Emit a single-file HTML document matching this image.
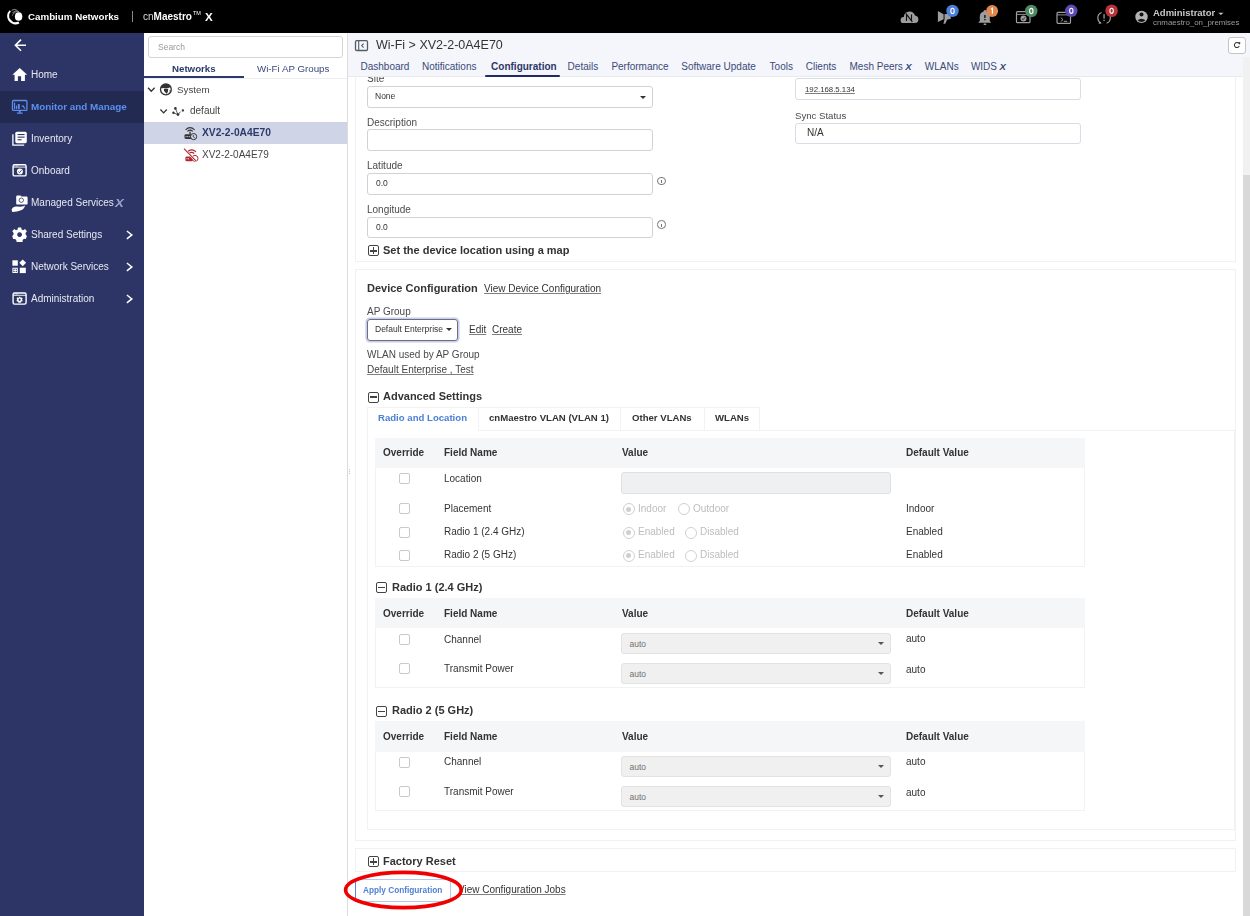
<!DOCTYPE html>
<html><head><meta charset="utf-8">
<style>
*{box-sizing:border-box;margin:0;padding:0}
html,body{width:1250px;height:916px;overflow:hidden;background:#fff;font-family:"Liberation Sans",sans-serif;color:#333}
.t{will-change:transform}
.a{position:absolute;white-space:nowrap}
.t{position:absolute;white-space:nowrap;line-height:1}
.info{position:absolute;width:8.5px;height:8.5px;border:0.9px solid #777;border-radius:50%}
.info::after{content:"";position:absolute;left:2.9px;top:2.6px;width:0.9px;height:3px;background:#777}
#hdr{position:absolute;left:0;top:0;width:1250px;height:32.7px;background:#000;z-index:3}
#side{position:absolute;left:0;top:32px;width:144px;height:884px;background:#2d3566}
#tree{position:absolute;left:144px;top:32px;width:203px;height:884px;background:#fff}
#main{position:absolute;left:347px;top:32px;width:903px;height:884px;background:#fff;border-left:1px solid #d8d8d8}
.sx{left:31px;color:#e6e8f0;font-size:10px}
.card{position:absolute;border:1px solid #f1f1f3;background:#fff}
.lbl{position:absolute;font-size:10px;color:#4a4a4a;white-space:nowrap;margin-top:0.6px}
.inp{position:absolute;border:1px solid #cfd3d8;border-radius:3px;background:#fff;font-size:8.5px;color:#333}
.bt{font-weight:bold;color:#333}
.tabl{position:absolute;left:375px;width:710px;border:1px solid #f1f2f3}
.th{position:absolute;left:0;top:0;width:708px;height:30px;background:#f5f6f8}
.th span{position:absolute;top:10px;font-size:10px;font-weight:bold;color:#333}
.cb{position:absolute;width:11px;height:11px;border:1px solid #c9c9c9;border-radius:2px;background:#fff}
.td{position:absolute;font-size:10px;color:#333;white-space:nowrap}
.rd{position:absolute;width:12px;height:12px;border:1px solid #d0d0d0;border-radius:50%;background:#fff}
.rd.on::after{content:"";position:absolute;left:2.5px;top:2.5px;width:5px;height:5px;border-radius:50%;background:#cfcfcf}
.rt{position:absolute;font-size:10px;color:#bdbdbd;white-space:nowrap}
.sel{position:absolute;left:621px;width:270px;height:21px;background:#f0f0f0;border:1px solid #e2e2e2;border-radius:3px}
.sel span{position:absolute;left:7.5px;top:6.3px;line-height:1;font-size:8.5px;color:#707070}
.car{position:absolute;width:0;height:0;border-left:3px solid transparent;border-right:3px solid transparent;border-top:3px solid #333}
.pm{position:absolute;width:11.3px;height:11px;border:1.3px solid #444;border-radius:2px}
.pm::before{content:"";position:absolute;left:1.1px;right:1.1px;top:3.75px;height:1.5px;background:#444}
.pm.plus::after{content:"";position:absolute;top:1.1px;bottom:1.1px;left:3.95px;width:1.5px;background:#444}
.tab{position:absolute;top:61.5px;line-height:1;font-size:10px;color:#3b4a78;white-space:nowrap;z-index:7}
u{text-decoration:underline}
.t[style*="underline"]{text-decoration-color:#808080 !important}
</style></head><body>

<!-- HEADER -->
<div id="hdr">
  
  <div class="t" style="left:28.3px;top:12px;font-size:9.75px;font-weight:bold;color:#fff">Cambium Networks</div>
  <div class="a" style="left:131.5px;top:11px;width:1px;height:10.5px;background:#8a8a8a"></div>
  <div class="t" style="left:143px;top:12.3px;font-size:10px;color:#fff"><span style="color:#ddd">cn</span><b>Maestro</b></div>
  <div class="t" style="left:192.5px;top:10.8px;font-size:5.5px;color:#fff">TM</div>
  <div class="t" style="left:204.8px;top:10.6px;font-size:11.6px;font-weight:bold;color:#fff">X</div>
  <div class="t" style="left:1152.5px;top:7.9px;font-size:9.5px;font-weight:bold;color:#c8c8c8">Administrator</div>
  <div class="t" style="left:1152.5px;top:18.8px;font-size:7.9px;color:#9a9a9a">cnmaestro_on_premises</div>
</div>

<!-- SIDEBAR -->
<div id="side"></div>
<div class="a" style="left:0;top:91px;width:144px;height:31.5px;background:#222a52"></div>
<div class="t sx" style="top:calc(69.7px + 0.5px)">Home</div>
<div class="t sx" style="top:calc(101.3px + 0.5px);color:#5b8ff0;font-weight:bold;font-size:9.85px">Monitor and Manage</div>
<div class="t sx" style="top:calc(133.7px + 0.5px)">Inventory</div>
<div class="t sx" style="top:calc(165.4px + 0.5px)">Onboard</div>
<div class="t sx" style="top:calc(197.5px + 0.5px)">Managed Services</div>
<div class="t sx" style="top:calc(229.5px + 0.5px)">Shared Settings</div>
<div class="t sx" style="top:calc(261.5px + 0.5px)">Network Services</div>
<div class="t sx" style="top:calc(293.3px + 0.5px)">Administration</div>
<div class="t" style="left:114.6px;top:197.6px;font-size:11px;font-weight:bold;font-style:italic;color:#9aa4d2;transform:scaleX(1.2);transform-origin:0 0">X</div>

<!-- TREE -->
<div id="tree"></div>
<div class="a" style="left:148px;top:36px;width:195px;height:22px;border:1px solid #d5d5d5;border-radius:3px"></div>
<div class="t" style="left:157.5px;top:42.8px;font-size:8.5px;color:#999">Search</div>
<div class="t" style="left:171.9px;top:63.6px;font-size:9.7px;font-weight:bold;color:#2b3a6b">Networks</div>
<div class="t" style="left:257.3px;top:63.6px;font-size:9.75px;color:#3b4a78">Wi-Fi AP Groups</div>
<div class="a" style="left:144px;top:76px;width:100px;height:2px;background:#2b3a6b"></div>
<div class="a" style="left:144px;top:78px;width:203px;height:1px;background:#eee"></div>
<div class="t" style="left:176.8px;top:84.5px;font-size:9.75px;color:#444">System</div>
<div class="t" style="left:189.7px;top:106px;font-size:10px;color:#444">default</div>
<div class="a" style="left:144px;top:122.2px;width:203px;height:21.6px;background:#cfd4e6"></div>
<div class="t" style="left:201.7px;top:127.5px;font-size:10.25px;font-weight:bold;color:#2b3a6b">XV2-2-0A4E70</div>
<div class="t" style="left:201.7px;top:149.9px;font-size:10px;color:#444">XV2-2-0A4E79</div>

<!-- MAIN -->
<div class="a" style="left:347px;top:32px;width:1px;height:884px;background:#dcdcdc"></div>

<!-- card 1 -->
<div class="card" style="left:355px;top:40px;width:881px;height:222px"></div>
<div class="t lbl" style="left:367px;top:73px">Site</div>
<div class="inp" style="left:367px;top:86px;width:286px;height:22px"></div>
<div class="t" style="left:375px;top:91.6px;font-size:8.5px;color:#333">None</div>
<div class="car" style="left:640px;top:96px"></div>
<div class="t lbl" style="left:367px;top:117.5px">Description</div>
<div class="inp" style="left:367px;top:129px;width:286px;height:22px"></div>
<div class="t lbl" style="left:367px;top:160.9px">Latitude</div>
<div class="inp" style="left:367px;top:173px;width:286px;height:22px"></div>
<div class="t" style="left:376.4px;top:179.4px;font-size:8.5px;color:#333">0.0</div>
<div class="info" style="left:657px;top:176.5px"></div>
<div class="t lbl" style="left:367px;top:204.5px">Longitude</div>
<div class="inp" style="left:367px;top:217px;width:286px;height:21px"></div>
<div class="t" style="left:376.4px;top:223.2px;font-size:8.5px;color:#333">0.0</div>
<div class="info" style="left:657px;top:220.3px"></div>
<div class="pm plus" style="left:367.8px;top:245.3px"></div>
<div class="t bt" style="left:383.3px;top:245.4px;font-size:11px">Set the device location using a map</div>

<div class="inp" style="left:795px;top:78px;width:286px;height:22px;border-color:#d7dde4"></div>
<div class="t" style="left:804.8px;top:85.6px;font-size:7.8px;color:#333;text-decoration:underline">192.168.5.134</div>
<div class="t lbl" style="left:795.4px;top:110.3px;font-size:9.6px">Sync Status</div>
<div class="inp" style="left:795px;top:122.5px;width:286px;height:21.5px;border-color:#d7dde4"></div>
<div class="t" style="left:807px;top:128.1px;font-size:10px;color:#333">N/A</div>

<!-- content header (covers) -->
<div class="a" style="left:348px;top:32.7px;width:902px;height:44.6px;background:#f4f6fb;border-bottom:1px solid #e8eaee;z-index:5"></div>
<div class="a" style="left:1243px;top:57px;width:7px;height:859px;background:#f1f1f1;z-index:6"></div>
<div class="a" style="left:1243px;top:175px;width:7px;height:741px;background:#d9d9d9;z-index:6"></div>
<div class="a" style="left:1227.5px;top:36.5px;width:18.7px;height:17.2px;background:#fff;border:1px solid #c4c4c4;border-radius:3px;z-index:7"></div>
<div class="t" style="left:375.5px;top:38.9px;font-size:12.5px;color:#333;z-index:7">Wi-Fi &gt; XV2-2-0A4E70</div>
<div class="tab" style="left:360.5px">Dashboard</div>
<div class="tab" style="left:422px">Notifications</div>
<div class="tab" style="left:491.1px;font-weight:bold;color:#2d3768">Configuration</div>
<div class="a" style="left:485px;top:75px;width:75px;height:2px;background:#1f2a66;border-radius:1px;z-index:7"></div>
<div class="tab" style="left:567.6px">Details</div>
<div class="tab" style="left:611.4px">Performance</div>
<div class="tab" style="left:681.3px">Software Update</div>
<div class="tab" style="left:769.6px">Tools</div>
<div class="tab" style="left:805.7px">Clients</div>
<div class="tab" style="left:849.5px">Mesh Peers<i style="font-weight:bold;font-size:9.6px;margin-left:2.5px">X</i></div>
<div class="tab" style="left:924.8px">WLANs</div>
<div class="tab" style="left:970.9px">WIDS<i style="font-weight:bold;font-size:9.6px;margin-left:2.5px">X</i></div>

<!-- card 2 -->
<div class="card" style="left:355px;top:269px;width:881px;height:572px"></div>
<div class="t bt" style="left:366.8px;top:283.4px;font-size:11px">Device Configuration</div>
<div class="t" style="left:484.4px;top:284.2px;font-size:10px;color:#333;text-decoration:underline">View Device Configuration</div>
<div class="t lbl" style="left:366.8px;top:306.5px">AP Group</div>
<div class="a" style="left:366.8px;top:319.3px;width:91.4px;height:21.6px;border:1px solid #707070;border-radius:3px;box-shadow:0 0 0 1.6px #c6ccf6"></div>
<div class="t" style="left:374.7px;top:325px;font-size:8.5px;color:#333">Default Enterprise</div>
<div class="car" style="left:446px;top:328.4px"></div>
<div class="t" style="left:468.7px;top:324.9px;font-size:10px;color:#333;text-decoration:underline">Edit</div>
<div class="t" style="left:492px;top:324.9px;font-size:10px;color:#333;text-decoration:underline">Create</div>
<div class="t lbl" style="left:366.8px;top:349.5px">WLAN used by AP Group</div>
<div class="t" style="left:366.8px;top:364.5px;font-size:10px;color:#444;text-decoration:underline">Default Enterprise , Test</div>
<div class="pm" style="left:367.5px;top:391.5px"></div>
<div class="t bt" style="left:383.1px;top:390.7px;font-size:11px">Advanced Settings</div>

<div class="a" style="left:367px;top:430px;width:868px;height:400px;border:1px solid #f1f2f3"></div>
<div class="a" style="left:367px;top:407px;width:393px;height:23px;border:1px solid #f1f2f3;border-bottom:none;background:#fff"></div>
<div class="a" style="left:477.5px;top:407px;width:1px;height:23px;background:#f1f2f3"></div>
<div class="a" style="left:620px;top:407px;width:1px;height:23px;background:#f1f2f3"></div>
<div class="a" style="left:703.5px;top:407px;width:1px;height:23px;background:#f1f2f3"></div>
<div class="a" style="left:368px;top:429.5px;width:109.5px;height:1.5px;background:#fff"></div>
<div class="t" style="left:378.3px;top:412.9px;font-size:9.6px;font-weight:bold;color:#4a7fd4">Radio and Location</div>
<div class="t bt" style="left:489px;top:412.9px;font-size:9.6px">cnMaestro VLAN (VLAN 1)</div>
<div class="t bt" style="left:632px;top:412.9px;font-size:9.6px">Other VLANs</div>
<div class="t bt" style="left:715.2px;top:412.9px;font-size:9.6px">WLANs</div>

<div class="a" style="left:375px;top:437.7px;width:710px;height:129.7px;border:1px solid #f1f2f3;border-top:none"></div>
<div class="a" style="left:375px;top:437.7px;width:710px;height:30.30000000000001px;background:#f5f6f8"></div>
<div class="t bt" style="left:383px;top:447.6px;font-size:10px">Override</div>
<div class="t bt" style="left:444.4px;top:447.6px;font-size:10px">Field Name</div>
<div class="t bt" style="left:621.6px;top:447.6px;font-size:10px">Value</div>
<div class="t bt" style="left:905.5px;top:447.6px;font-size:10px">Default Value</div>
<div class="cb" style="left:399.3px;top:473.4px"></div>
<div class="t td" style="left:444.4px;top:473.6px">Location</div>
<div class="a" style="left:621.3px;top:472px;width:269.5px;height:21.6px;background:#eff0f2;border:1px solid #dfe1e4;border-radius:3px"></div>
<div class="cb" style="left:399.3px;top:503.4px"></div>
<div class="t td" style="left:444.4px;top:503.5px">Placement</div>
<div class="rd on" style="left:622.9px;top:503.2px"></div>
<div class="t rt" style="left:637.6px;top:503.5px">Indoor</div>
<div class="rd" style="left:678px;top:503.2px"></div>
<div class="t rt" style="left:692.5px;top:503.5px">Outdoor</div>
<div class="t td" style="left:905.5px;top:503.5px">Indoor</div>
<div class="cb" style="left:399.3px;top:526.7px"></div>
<div class="t td" style="left:444.4px;top:527px">Radio 1 (2.4 GHz)</div>
<div class="rd on" style="left:622.9px;top:526.5px"></div>
<div class="t rt" style="left:637.6px;top:527px">Enabled</div>
<div class="rd" style="left:685.3px;top:526.5px"></div>
<div class="t rt" style="left:700px;top:527px">Disabled</div>
<div class="t td" style="left:905.5px;top:527px">Enabled</div>
<div class="cb" style="left:399.3px;top:549.7px"></div>
<div class="t td" style="left:444.4px;top:549.9px">Radio 2 (5 GHz)</div>
<div class="rd on" style="left:622.9px;top:549.5px"></div>
<div class="t rt" style="left:637.6px;top:549.9px">Enabled</div>
<div class="rd" style="left:685.3px;top:549.5px"></div>
<div class="t rt" style="left:700px;top:549.9px">Disabled</div>
<div class="t td" style="left:905.5px;top:549.9px">Enabled</div>
<div class="pm" style="left:375.9px;top:581.8px"></div>
<div class="t bt" style="left:391.5px;top:582px;font-size:11px">Radio 1 (2.4 GHz)</div>
<div class="a" style="left:375px;top:598.2px;width:710px;height:89.79999999999995px;border:1px solid #f1f2f3;border-top:none"></div>
<div class="a" style="left:375px;top:598.2px;width:710px;height:30.299999999999955px;background:#f5f6f8"></div>
<div class="t bt" style="left:383px;top:608.7px;font-size:10px">Override</div>
<div class="t bt" style="left:444.4px;top:608.7px;font-size:10px">Field Name</div>
<div class="t bt" style="left:621.6px;top:608.7px;font-size:10px">Value</div>
<div class="t bt" style="left:905.5px;top:608.7px;font-size:10px">Default Value</div>
<div class="cb" style="left:399.3px;top:633.6px"></div>
<div class="t td" style="left:444.4px;top:634.5px">Channel</div>
<div class="sel" style="top:632.5px"><span>auto</span></div>
<div class="car" style="left:878.4px;top:642.0px;border-top-color:#555"></div>
<div class="t td" style="left:905.5px;top:634.4px">auto</div>
<div class="cb" style="left:399.3px;top:663.4px"></div>
<div class="t td" style="left:444.4px;top:664.0px">Transmit Power</div>
<div class="sel" style="top:662.5px"><span>auto</span></div>
<div class="car" style="left:878.4px;top:672.0px;border-top-color:#555"></div>
<div class="t td" style="left:905.5px;top:664.6px">auto</div>
<div class="pm" style="left:375.9px;top:705.8px"></div>
<div class="t bt" style="left:391.5px;top:705.1px;font-size:11px">Radio 2 (5 GHz)</div>
<div class="a" style="left:375px;top:721.1px;width:710px;height:89.79999999999995px;border:1px solid #f1f2f3;border-top:none"></div>
<div class="a" style="left:375px;top:721.1px;width:710px;height:30.5px;background:#f5f6f8"></div>
<div class="t bt" style="left:383px;top:731.8px;font-size:10px">Override</div>
<div class="t bt" style="left:444.4px;top:731.8px;font-size:10px">Field Name</div>
<div class="t bt" style="left:621.6px;top:731.8px;font-size:10px">Value</div>
<div class="t bt" style="left:905.5px;top:731.8px;font-size:10px">Default Value</div>
<div class="cb" style="left:399.3px;top:756.9px"></div>
<div class="t td" style="left:444.4px;top:757.0px">Channel</div>
<div class="sel" style="top:755.5px"><span>auto</span></div>
<div class="car" style="left:878.4px;top:765.0px;border-top-color:#555"></div>
<div class="t td" style="left:905.5px;top:757.4px">auto</div>
<div class="cb" style="left:399.3px;top:786.4px"></div>
<div class="t td" style="left:444.4px;top:787.0px">Transmit Power</div>
<div class="sel" style="top:785.5px"><span>auto</span></div>
<div class="car" style="left:878.4px;top:795.0px;border-top-color:#555"></div>
<div class="t td" style="left:905.5px;top:787.5px">auto</div>


<svg class="a" style="left:0;top:0;z-index:8" width="1250" height="916" viewBox="0 0 1250 916">
 <!-- cambium logo -->
 <path d="M9.6,10.2 A8.3,8.3 0 0 0 19.4,23.4 L18.4,21.5 A6.4,6.4 0 0 1 10.9,11.4 Z" fill="#fff"/>
 <g fill="none" stroke="#fff">
  <path d="M11.6,10.2 Q14.5,8.6 17.6,10.4" stroke-width="0.7" opacity="0.8"/>
  <path d="M12.6,12.6 Q15.4,10.4 19,11.6" stroke-width="0.7" opacity="0.8"/>
  <path d="M12.2,15.8 Q12.8,12.8 15.6,12.4" stroke-width="0.6" opacity="0.7"/>
 </g>
 <ellipse cx="18.6" cy="16.5" rx="3.7" ry="4.3" fill="#fff"/>
 <!-- back arrow -->
 <path d="M21,39.6 L15.4,45.2 L21,50.8 M15.6,45.2 H26" stroke="#fff" stroke-width="1.6" fill="none"/>
 <!-- home -->
 <path d="M12.3,74.8 L19.75,67.9 L27.2,74.8 Z" fill="#fff"/>
 <path d="M14.6,74 H24.9 V80.9 H21.1 V76.3 H17.9 V80.9 H14.6 Z" fill="#fff"/>
 <!-- monitor -->
 <g fill="none" stroke="#5b8ff0" stroke-width="1.3">
  <rect x="12.5" y="100.5" width="14.4" height="9.9" rx="1"/>
 </g>
 <g fill="#5b8ff0">
  <rect x="18.8" y="110.4" width="1.9" height="2.4"/>
  <rect x="16.8" y="112.6" width="5.9" height="1.2" rx="0.5"/>
  <rect x="14" y="102.6" width="1.1" height="6.3" rx="0.5"/>
  <rect x="15.9" y="105.6" width="1.1" height="3.3" rx="0.5"/>
  <rect x="17.8" y="104" width="2" height="4.9" rx="0.6"/>
  <path d="M21.2,106.3 Q22.4,104.6 23.6,105.4 L25.3,108.2 L24.5,108.9 L22.6,106.6 Z"/>
 </g>
 <!-- inventory -->
 <rect x="15.3" y="131.7" width="11.5" height="11.5" rx="1.6" fill="#fff"/>
 <g fill="#2d3566"><rect x="17.6" y="134" width="7" height="1.1"/><rect x="17.6" y="136.6" width="7" height="1.1"/><rect x="17.6" y="139.2" width="4" height="1.1"/></g>
 <path d="M12.9,134.3 V145.2 H24.2" stroke="#fff" stroke-width="1.3" fill="none"/>
 <!-- onboard -->
 <rect x="13.1" y="164.8" width="13" height="11.1" rx="1.5" fill="none" stroke="#fff" stroke-width="1.4"/>
 <path d="M13.1,167.1 H26.1" stroke="#fff" stroke-width="0.9"/>
 <g fill="#fff"><circle cx="15" cy="165.9" r="0.5"/><circle cx="16.5" cy="165.9" r="0.5"/><circle cx="18" cy="165.9" r="0.5"/></g>
 <circle cx="19.9" cy="171.4" r="3" fill="#fff"/>
 <path d="M18.3,171.6 L19.5,172.7 L21.6,170.2" stroke="#2d3566" stroke-width="0.9" fill="none"/>
 <!-- managed services -->
 <path d="M16.2,196.8 Q16.2,195.6 17.4,195.6 H20.5 L21.5,196.6 H26.4 Q27.6,196.6 27.6,197.8 V203.4 Q27.6,204.6 26.4,204.6 H17.4 Q16.2,204.6 16.2,203.4 Z" fill="#fff"/>
 <circle cx="21.3" cy="200.2" r="2.2" fill="none" stroke="#2d3566" stroke-width="0.8"/>
 <path d="M11.6,209.6 Q13,206.2 17,206.6 L20.5,206.8 Q24,206.2 25,205.4 Q24.6,208.6 21,210.2 Q17.5,212 12.2,212 Z" fill="#fff"/>
 <!-- gear -->
 <g transform="translate(19.6,234.6)">
  <path fill="#fff" fill-rule="evenodd" d="M-1.6,-7.2 H1.6 L2,-5 L3.6,-4.3 L5.4,-5.6 L7.3,-3.3 L5.9,-1.6 L6.1,0.2 L7.3,1.4 L6.2,4.3 L4.4,4.2 L3,5.5 L3,7.3 H-0.5 H-3 L-3.3,5.5 L-4.6,4.3 L-6.4,4.3 L-7.4,1.4 L-6.1,0.2 L-6,-1.6 L-7.3,-3.3 L-5.4,-5.6 L-3.6,-4.3 L-2,-5 Z M0,-2.4 A2.4,2.4 0 1 0 0.01,-2.4 Z"/>
 </g>
 <!-- network services -->
 <g fill="#fff">
  <rect x="12.4" y="260.3" width="5.4" height="5.4"/>
  <path d="M22.7,259.4 L26.1,262.8 L22.7,266.2 L19.3,262.8 Z"/>
  <rect x="19.8" y="267.7" width="6" height="5.4"/>
  <path fill-rule="evenodd" d="M12.4,267.7 H17.8 V273.1 H12.4 Z M13.4,268.7 V272.1 H16.8 V268.7 Z"/>
  <rect x="14.6" y="268.7" width="1.1" height="3.4"/><rect x="13.4" y="269.9" width="3.4" height="1.1"/>
 </g>
 <!-- administration -->
 <rect x="13.1" y="293" width="13" height="11.1" rx="1.5" fill="none" stroke="#fff" stroke-width="1.4"/>
 <path d="M13.1,295.3 H26.1" stroke="#fff" stroke-width="0.9"/>
 <g fill="#fff"><circle cx="15" cy="294.1" r="0.5"/><circle cx="16.5" cy="294.1" r="0.5"/><circle cx="18" cy="294.1" r="0.5"/></g>
 <g transform="translate(19.6,299.7) scale(0.42)">
  <path fill="#fff" fill-rule="evenodd" d="M-1.6,-7.2 H1.6 L2,-5 L3.6,-4.3 L5.4,-5.6 L7.3,-3.3 L5.9,-1.6 L6.1,0.2 L7.3,1.4 L6.2,4.3 L4.4,4.2 L3,5.5 L3,7.3 H-0.5 H-3 L-3.3,5.5 L-4.6,4.3 L-6.4,4.3 L-7.4,1.4 L-6.1,0.2 L-6,-1.6 L-7.3,-3.3 L-5.4,-5.6 L-3.6,-4.3 L-2,-5 Z M0,-2.6 A2.6,2.6 0 1 0 0.01,-2.6 Z"/>
 </g>
 <!-- chevrons -->
 <g stroke="#fff" stroke-width="1.5" fill="none">
  <path d="M126.9,231 L131.8,234.9 L126.9,238.8"/>
  <path d="M126.9,263 L131.8,266.9 L126.9,270.8"/>
  <path d="M126.9,295 L131.8,298.9 L126.9,302.8"/>
 </g>

 <!-- tree icons -->
 <g stroke="#333" stroke-width="1.3" fill="none">
  <path d="M148,87.8 L151.3,91.2 L154.6,87.8"/>
  <path d="M160.4,109.5 L163.6,112.9 L166.8,109.5"/>
 </g>
 <circle cx="165.9" cy="89.4" r="5.4" fill="#fff" stroke="#333" stroke-width="1.35"/>
 <path d="M160.9,87.9 Q161.6,84.4 165.9,84 Q170.2,84.4 170.9,87.4 L169.2,87.6 Q168.4,88.4 167.4,88.1 L165,88.3 Q163.6,87.5 162.6,88.3 Z" fill="#333"/>
 <path d="M163.9,88.9 Q166,87.9 168.2,88.9 Q168.4,91.6 166.6,93.8 Q165.8,92.6 164.7,91.8 Q163.8,90.8 163.9,88.9 Z" fill="#333"/>
 <path d="M169.6,90 L170.8,90.6 L169.8,92.8 Z" fill="#333"/>
 <g fill="#333">
  <circle cx="175.4" cy="108.4" r="1.3"/><circle cx="182.9" cy="110.5" r="1.15"/><circle cx="173.4" cy="112.8" r="1.2"/><circle cx="178" cy="114.6" r="1.35"/>
 </g>
 <path d="M175.4,108.4 L178,114.6 L180.6,111.6 M173.4,112.8 L178,114.6" stroke="#333" stroke-width="0.8" fill="none"/>
 <!-- AP online -->
 <g fill="none" stroke="#333" stroke-width="1.1">
  <path d="M185.6,129.8 Q190,125.6 194.6,129.8"/>
  <path d="M187.4,131.3 Q190.1,129 192.8,131.3"/>
 </g>
 <rect x="189.4" y="131.6" width="1.3" height="3" fill="#333"/>
 <rect x="184.5" y="134.3" width="7.6" height="4.6" rx="1.3" fill="#333"/>
 <g fill="#cfd4e6"><rect x="185.6" y="136.1" width="1" height="1"/><rect x="187.2" y="136.1" width="1" height="1"/><rect x="188.8" y="136.1" width="1" height="1"/></g>
 <circle cx="193.6" cy="136.6" r="3.1" fill="#cfd4e6" stroke="#333" stroke-width="1"/>
 <path d="M193.3,134.8 V137 L194.8,137.8" stroke="#333" stroke-width="0.8" fill="none"/>
 <!-- AP offline -->
 <g fill="none" stroke="#b0272f" stroke-width="1.1">
  <path d="M187.2,152 Q191.6,147.8 196,151.8"/>
  <path d="M189,153.5 Q191.6,151.3 194.2,153.5"/>
 </g>
 <rect x="185.4" y="156.5" width="7.6" height="4.7" rx="1.3" fill="#b0272f"/>
 <g fill="#fff"><rect x="186.5" y="158.3" width="1" height="1"/><rect x="188.1" y="158.3" width="1" height="1"/></g>
 <circle cx="195" cy="158.4" r="3" fill="#fff" stroke="#b0272f" stroke-width="1"/>
 <path d="M184,148.7 L196.2,161.2" stroke="#fff" stroke-width="2.2"/>
 <path d="M184,148.7 L196.2,161.2" stroke="#b0272f" stroke-width="1.1"/>

 <!-- top right icons -->
 <path d="M903.2,23.1 Q900.6,23.1 900.6,20.2 Q900.6,17.2 903.8,17.1 Q904.2,11.5 909.6,11.4 Q914,11.6 915,15.6 Q918.4,16 918.4,19.6 Q918.3,23.1 914.8,23.1 Z" fill="#9d9d9d"/>
 <path d="M906.5,21 V14.5 L911.5,21 V14.5 M905.8,13.4 L912.4,21.8" stroke="#111" stroke-width="1.1" fill="none"/>
 <path d="M937.9,10.9 L943.6,14.2 V19.3 L937.9,22 Z" fill="#9d9d9d"/>
 <path d="M944.5,14.2 L950.7,13.3 V18.9 L947.2,19.4 L945.3,23.8 L943.4,23.8 L944.5,19.3 Z" fill="#9d9d9d"/>
 <path d="M985,10 Q986.2,10 986.2,11.4 Q989.7,12.5 989.8,16.5 V21.1 L991.3,22.7 H978.2 L979.8,21.1 V16.5 Q979.9,12.5 983.5,11.4 Q983.6,10 985,10 Z" fill="#9d9d9d"/>
 <rect x="983.5" y="23.6" width="2.9" height="1.4" rx="0.7" fill="#9d9d9d"/>
 <rect x="984.2" y="15" width="1.4" height="3" fill="#111"/><rect x="984.2" y="19" width="1.4" height="1.3" fill="#111"/>
 <rect x="1016.5" y="11.7" width="13.5" height="11" rx="1" fill="none" stroke="#9d9d9d" stroke-width="1.2"/>
 <path d="M1016.5,14.4 H1030" stroke="#9d9d9d" stroke-width="0.9"/>
 <circle cx="1023.5" cy="18.4" r="3" fill="#9d9d9d"/>
 <path d="M1022,18.8 L1023.1,19.7 L1025,17.3" stroke="#111" stroke-width="0.8" fill="none"/>
 <rect x="1057" y="12.4" width="13.5" height="10.9" rx="1" fill="none" stroke="#9d9d9d" stroke-width="1.2"/>
 <path d="M1057,14.9 H1070.5" stroke="#9d9d9d" stroke-width="0.9"/>
 <path d="M1060.8,17.6 L1063,19.7 L1060.8,21.6 M1063.8,21.3 H1067.2" stroke="#9d9d9d" stroke-width="1" fill="none"/>
 <path d="M1101.6,12.5 Q1097.8,14 1097.8,18 Q1098,21.8 1101,23 M1106.6,12.4 Q1110.4,14 1110.4,18 Q1110.2,21.9 1106.6,23.2" stroke="#9d9d9d" stroke-width="1.2" fill="none"/>
 <path d="M1099.2,21.4 L1101.8,23.6 L1098.6,23.8 Z" fill="#9d9d9d"/>
 <rect x="1103.4" y="14.2" width="1.3" height="4.4" fill="#9d9d9d"/><rect x="1103.4" y="19.8" width="1.3" height="1.3" fill="#9d9d9d"/>
 <!-- badges -->
 <circle cx="952.5" cy="10.9" r="6.2" fill="#4b7fd9"/>
 <circle cx="992.1" cy="11" r="6" fill="#e0874f"/>
 <circle cx="1031.3" cy="11" r="6.2" fill="#4f8a63"/>
 <circle cx="1071.3" cy="10.8" r="6.2" fill="#5b4bb5"/>
 <circle cx="1111.6" cy="10.8" r="6.3" fill="#b8333a"/>
 <g fill="none" stroke="#fff" stroke-width="1.1">
  <ellipse cx="952.5" cy="10.9" rx="1.7" ry="2.6"/>
  <ellipse cx="1031.3" cy="11" rx="1.7" ry="2.6"/>
  <ellipse cx="1071.3" cy="10.8" rx="1.7" ry="2.6"/>
  <ellipse cx="1111.6" cy="10.8" rx="1.7" ry="2.6"/>
  <path d="M991,9.2 L992.4,8.2 V13.8"/>
 </g>
 <!-- user -->
 <circle cx="1141.5" cy="16.9" r="6.2" fill="#b3b3b3"/>
 <circle cx="1141.5" cy="14.6" r="2" fill="#111"/>
 <path d="M1137.5,20.3 Q1141.5,17 1145.5,20.3 Q1143.8,21.9 1141.5,21.9 Q1139.2,21.9 1137.5,20.3 Z" fill="#111"/>
 <path d="M1218.3,12.7 H1223.5 L1220.9,15.1 Z" fill="#c8c8c8"/>

 <!-- title icon -->
 <rect x="355.5" y="40.7" width="12" height="9.8" rx="1.2" fill="none" stroke="#555c66" stroke-width="1.3"/>
 <path d="M358.7,40.7 V50.5" stroke="#555c66" stroke-width="1.1"/>
 <path d="M363.6,43.6 L361.7,45.6 L363.6,47.6" stroke="#555c66" stroke-width="1.1" fill="none"/>
 <!-- refresh -->
 <path d="M1238.8,43.44 A2.5,2.5 0 1 0 1239.25,45.9" stroke="#333" stroke-width="1.05" fill="none"/>
 <path d="M1237.8,42.5 L1240.3,42 L1240,44.8 Z" fill="#333"/>
 <!-- drag handle -->
 <g fill="#888"><circle cx="349.5" cy="469.5" r="0.45"/><circle cx="349.5" cy="471.5" r="0.45"/><circle cx="349.5" cy="473.5" r="0.45"/></g>
</svg>

<!-- factory reset -->
<div class="card" style="left:355px;top:848px;width:881px;height:24px"></div>
<div class="pm plus" style="left:368px;top:856.3px"></div>
<div class="t bt" style="left:383px;top:855.7px;font-size:11px">Factory Reset</div>
<div class="a" style="left:355.2px;top:879.2px;width:95.4px;height:22.8px;border:1.3px solid #b5c8ef;border-left:1.6px solid #5f86d4;background:#fff"></div>
<div class="t" style="left:363.2px;top:886.8px;font-size:8.25px;font-weight:bold;color:#4f7fd6">Apply Configuration</div>
<div class="t" style="left:457.5px;top:884.5px;font-size:10px;color:#333;text-decoration:underline">View Configuration Jobs</div>
<svg class="a" style="left:0;top:0;z-index:9" width="1250" height="916"><ellipse cx="403.4" cy="890" rx="57.8" ry="17.6" fill="none" stroke="#f00000" stroke-width="3.6"/></svg>
</body></html>
